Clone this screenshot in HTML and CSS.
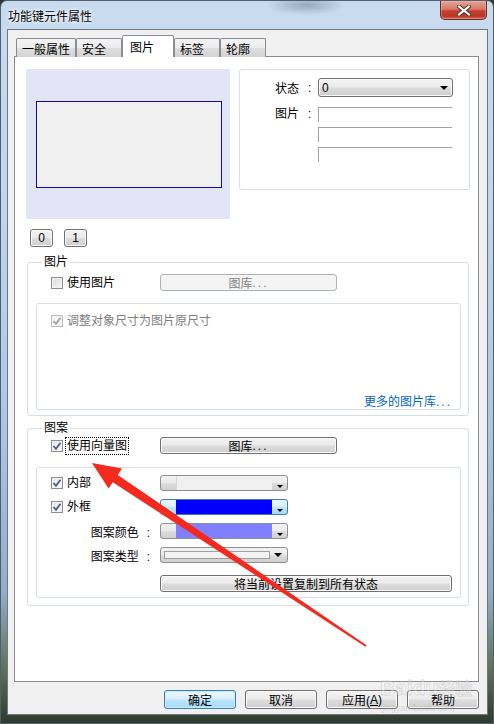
FILE: index.html
```html
<!DOCTYPE html>
<html lang="zh-CN">
<head>
    <meta charset="UTF-8">
    <title>功能键元件属性</title>
    <link rel="stylesheet" href="styles.css">
</head>
<body>
<div class="window">
    <div class="titlebar">
        <span class="title">功能键元件属性</span>
        <div class="close-btn">
            <svg width="14" height="11" viewBox="0 0 14 11">
                <path d="M2 1.5 L12 9.5 M12 1.5 L2 9.5" stroke="#4a2a26" stroke-width="4" stroke-linecap="square"/>
                <path d="M2 1.5 L12 9.5 M12 1.5 L2 9.5" stroke="#ffffff" stroke-width="2.2" stroke-linecap="square"/>
            </svg>
        </div>
    </div>

    <div class="client">
        <div class="tabs">
            <div class="tab tab-wide">一般属性</div>
            <div class="tab">安全</div>
            <div class="tab active">图片</div>
            <div class="tab">标签</div>
            <div class="tab">轮廓</div>
        </div>

        <div class="tab-panel">
            <div class="top-row">
                <div class="preview"><div class="preview-rect"></div></div>
                <div class="state-box">
                    <div class="field-row">
                        <span class="lbl">状态</span><span class="colon">:</span>
                        <div class="combo"><span>0</span><i class="arrow"></i></div>
                    </div>
                    <div class="field-row pic-row">
                        <span class="lbl">图片</span><span class="colon">:</span>
                        <div class="edits">
                            <div class="edit"></div>
                            <div class="edit"></div>
                            <div class="edit"></div>
                        </div>
                    </div>
                </div>
            </div>

            <div class="state-btns">
                <div class="btn small">0</div>
                <div class="btn small">1</div>
            </div>

            <!-- picture group -->
            <fieldset class="group">
                <legend>图片</legend>
                <div class="opt-row">
                    <label class="check">
                        <span class="cb"></span>使用图片
                    </label>
                    <div class="btn disabled lib-btn">图库<span class="dots">...</span></div>
                </div>
                <div class="inner-box pic-inner">
                    <label class="check muted">
                        <span class="cb cb-off">
                            <svg width="10" height="10" viewBox="0 0 10 10"><path d="M1.5 5 L4 7.8 L8.5 1.8" fill="none" stroke="#a3a3a3" stroke-width="1.8"/></svg>
                        </span>调整对象尺寸为图片原尺寸
                    </label>
                    <a class="more-link">更多的图片库<span class="dots">...</span></a>
                </div>
            </fieldset>

            <!-- pattern group -->
            <fieldset class="group group-pattern">
                <legend>图案</legend>
                <div class="opt-row">
                    <label class="check">
                        <span class="cb cb-on">
                            <svg width="10" height="10" viewBox="0 0 10 10"><path d="M1.5 5 L4 7.8 L8.5 1.8" fill="none" stroke="#4b5f8e" stroke-width="1.8"/></svg>
                        </span><span class="focus">使用向量图</span>
                    </label>
                    <div class="btn lib-btn">图库<span class="dots">...</span></div>
                </div>
                <div class="inner-box pattern-inner">
                    <div class="p-row">
                        <label class="check">
                            <span class="cb cb-on">
                                <svg width="10" height="10" viewBox="0 0 10 10"><path d="M1.5 5 L4 7.8 L8.5 1.8" fill="none" stroke="#4b5f8e" stroke-width="1.8"/></svg>
                            </span>内部
                        </label>
                        <div class="colorpick"><span class="cp-left"></span><span class="cp-swatch sw-light"></span><span class="cp-drop"><i></i></span></div>
                    </div>
                    <div class="p-row">
                        <label class="check">
                            <span class="cb cb-on">
                                <svg width="10" height="10" viewBox="0 0 10 10"><path d="M1.5 5 L4 7.8 L8.5 1.8" fill="none" stroke="#4b5f8e" stroke-width="1.8"/></svg>
                            </span>外框
                        </label>
                        <div class="colorpick focused"><span class="cp-left"></span><span class="cp-swatch sw-blue"></span><span class="cp-drop"><i></i></span></div>
                    </div>
                    <div class="p-row">
                        <span class="p-label">图案颜色<span class="colon2">:</span></span>
                        <div class="colorpick"><span class="cp-left"></span><span class="cp-swatch sw-lilac"></span><span class="cp-drop"><i></i></span></div>
                    </div>
                    <div class="p-row">
                        <span class="p-label">图案类型<span class="colon2">:</span></span>
                        <div class="typepick"><span class="tp-box"></span><i class="arrow"></i></div>
                    </div>
                    <div class="p-row copy-row">
                        <span class="p-label"></span>
                        <div class="btn copy-btn">将当前设置复制到所有状态</div>
                    </div>
                </div>
            </fieldset>
        </div>

        <div class="dialog-btns">
            <div class="btn dlg default">确定</div>
            <div class="btn dlg">取消</div>
            <div class="btn dlg">应用(<u>A</u>)</div>
            <div class="btn dlg">帮助</div>
        </div>
    </div>

    <!-- annotation drawn over the screenshot -->
    <svg class="overlay" width="494" height="724" viewBox="0 0 494 724">
        <polygon fill="#f42a1f" points="92,463 122,468.6 117.8,474.9 366.6,645.2 365.4,646.8 112.8,482.3 108.6,488.6"/>
        <text x="380" y="695" class="wm">Baidu<tspan class="wm-cn">经验</tspan></text>
        <text x="382" y="711" class="wm-small">jingyan.baidu.com</text>
    </svg>
</div>
</body>
</html>
```

FILE: styles.css
```css
* {
    box-sizing: border-box;
}

html, body {
    margin: 0;
    padding: 0;
}

body {
    width: 494px;
    height: 724px;
    overflow: hidden;
    font-family: "Liberation Sans", "Noto Sans CJK SC", sans-serif;
    font-size: 12px;
    color: #000;
    background: #2e3a2c;
}

.window {
    position: relative;
    width: 494px;
    height: 724px;
    padding: 0 5px 8px 6px;
    border: 1px solid #51606f;
    border-radius: 7px 7px 0 0;
    background:
        radial-gradient(ellipse 40px 10px at 305px 4px, rgba(90, 110, 130, 0.45), transparent),
        linear-gradient(to bottom, #c8dbef 0%, #bfd5ed 30%, #aac5e5 60%, #93adc8 82%, #5b6e55 93%, #2f3b2d 100%);
}

/* title bar */
.titlebar {
    height: 28px;
    display: flex;
    align-items: center;
    padding-left: 1px;
}

.title {
    font-size: 12px;
    text-shadow: 0 0 6px #fff, 0 0 3px #fff;
}

.close-btn {
    align-self: flex-start;
    margin-left: auto;
    margin-right: 1px;
    width: 47px;
    height: 19px;
    border: 1px solid #6b2c25;
    border-top: none;
    border-radius: 0 0 5px 5px;
    background: linear-gradient(to bottom, #e6a596 0%, #d77968 45%, #c3402e 55%, #b83a2a 85%, #d06a54 100%);
    display: flex;
    align-items: center;
    justify-content: center;
    box-shadow: inset 0 0 0 1px rgba(255, 200, 190, 0.35);
}

/* client area */
.client {
    height: 686px;
    border: 1px solid #6f7782;
    background: #f0f0f0;
    padding: 5px 8px 0 6px;
}

.tabs {
    display: flex;
    align-items: flex-end;
    height: 22px;
    margin-bottom: -1px;
    padding-left: 2px;
}

.tab {
    width: 46px;
    height: 19px;
    border: 1px solid #898c95;
    border-bottom: none;
    border-radius: 2px 2px 0 0;
    background: linear-gradient(to bottom, #f4f4f4 0%, #ececec 50%, #dedede 52%, #d4d4d4 100%);
    display: flex;
    align-items: center;
    padding-left: 5px;
}

.tab-wide {
    width: 60px;
}

.tab.active {
    position: relative;
    z-index: 1;
    width: 52px;
    height: 22px;
    background: #fff;
    padding-left: 7px;
}

.tab-panel {
    height: 626px;
    border: 1px solid #898c95;
    background: #fff;
    padding: 12px 0 0 11px;
}

.top-row {
    display: flex;
    gap: 9px;
    height: 150px;
}

.preview {
    width: 204px;
    height: 150px;
    background: #e4e4f7;
    padding: 32px 0 0 10px;
}

.preview-rect {
    width: 186px;
    height: 87px;
    border: 1px solid #0c0ca6;
    background: #f0f0f0;
}

.state-box {
    width: 231px;
    height: 121px;
    border: 1px solid #d5dfe5;
    border-radius: 3px;
    padding: 8px 0 0 35px;
}

.field-row {
    display: flex;
    align-items: center;
}

.pic-row {
    align-items: flex-start;
    margin-top: 10px;
    line-height: 15px;
}

.lbl {
    width: 24px;
}

.colon {
    width: 19px;
    padding-left: 9px;
}

.combo {
    width: 135px;
    height: 19px;
    border: 1px solid #707070;
    border-radius: 3px;
    background: linear-gradient(to bottom, #f2f2f2 0%, #ebebeb 49%, #dddddd 51%, #cfcfcf 100%);
    box-shadow: inset 0 0 0 1px #fafafa;
    display: flex;
    align-items: center;
    padding: 0 4px 0 3px;
}

.arrow {
    margin-left: auto;
    border-left: 4px solid transparent;
    border-right: 4px solid transparent;
    border-top: 4px solid #000;
}

.edits {
    display: flex;
    flex-direction: column;
    gap: 5px;
}

.edit {
    width: 134px;
    height: 15px;
    border-top: 1px solid #a0a0a0;
    border-left: 1px solid #a0a0a0;
    background: #fff;
}

.state-btns {
    display: flex;
    gap: 11px;
    margin: 10px 0 0 4px;
}

/* win7 push buttons */
.btn {
    display: flex;
    align-items: center;
    justify-content: center;
    border: 1px solid #707070;
    border-radius: 3px;
    background: linear-gradient(to bottom, #f2f2f2 0%, #ebebeb 49%, #dddddd 51%, #cfcfcf 100%);
    box-shadow: inset 0 0 0 1px #fbfbfb;
}

.btn.small {
    width: 23px;
    height: 18px;
}

.btn.disabled {
    border-color: #adb2b5;
    background: #f4f4f4;
    box-shadow: none;
    color: #838383;
}

.dots {
    letter-spacing: 2px;
}

/* group boxes */
.group {
    width: 442px;
    margin: 8px 0 0 1px;
    border: 1px solid #d5dfe5;
    border-radius: 3px;
    padding: 5px 7px 5px 8px;
    min-inline-size: 0;
}

.group legend {
    margin-left: 6px;
    padding: 0 2px;
    line-height: 14px;
}

.group-pattern {
    margin-top: 5px;
    padding-top: 2px;
    padding-bottom: 7px;
}

.opt-row {
    display: grid;
    grid-template-columns: 109px 177px;
    align-items: center;
    height: 17px;
    padding-left: 15px;
}

.opt-row .check {
    padding-top: 1px;
}

.lib-btn {
    width: 177px;
    height: 17px;
}

.check {
    display: flex;
    align-items: center;
    gap: 4px;
    line-height: 14px;
}

.cb {
    width: 12px;
    height: 12px;
    flex: none;
    border: 1px solid #8e8f8f;
    background: linear-gradient(135deg, #d8d8d8 0%, #e8e8e8 50%, #fafafa 100%);
    box-shadow: inset 0 0 0 1px #f3f3f3;
    display: flex;
    align-items: center;
    justify-content: center;
}

.cb-on {
    background: linear-gradient(135deg, #e4e4e4, #fbfbfb);
}

.cb-off {
    border-color: #bcbcbc;
    background: #f4f4f4;
    box-shadow: none;
}

.muted {
    color: #7d7d7d;
}

.focus {
    outline: 1px dotted #000;
    outline-offset: 1px;
}

.inner-box {
    border: 1px solid #d5dfe5;
    border-radius: 3px;
}

.pic-inner {
    height: 107px;
    margin-top: 12px;
    padding: 10px 8px 0 14px;
    display: flex;
    flex-direction: column;
}

.more-link {
    margin-top: auto;
    align-self: flex-end;
    color: #0066cc;
    line-height: 14px;
}

.pattern-inner {
    height: 131px;
    margin-top: 13px;
    padding: 7px 0 0 14px;
    display: flex;
    flex-direction: column;
    gap: 8px;
}

.p-row {
    display: flex;
    align-items: center;
    height: 16px;
}

.p-row .check,
.p-label {
    width: 109px;
    flex: none;
}

.p-label {
    text-align: right;
    padding-right: 10px;
}

.colon2 {
    margin-left: 8px;
}

.copy-row {
    height: 17px;
    margin-top: 4px;
}

.copy-btn {
    width: 292px;
    height: 17px;
}

.colorpick {
    width: 128px;
    height: 16px;
    display: flex;
    border: 1px solid #8e8f8f;
    border-radius: 3px;
    overflow: hidden;
    background: linear-gradient(to bottom, #f2f2f2 0%, #ebebeb 49%, #dddddd 51%, #cfcfcf 100%);
}

.colorpick.focused {
    border-color: #3c7fb1;
    background: linear-gradient(to bottom, #eaf6fd 0%, #d9f0fc 49%, #bee6fd 51%, #a7d9f5 100%);
}

.cp-left {
    width: 15px;
}

.cp-swatch {
    width: 96px;
}

.sw-light {
    background: #f0f0f0;
    border-left: 1px solid #d6d6d6;
}

.sw-blue {
    background: #0000ff;
}

.sw-lilac {
    background: #8080ff;
}

.cp-drop {
    flex: 1;
    display: flex;
    align-items: flex-end;
    justify-content: center;
    padding-bottom: 2px;
}

.cp-drop i {
    border-left: 3px solid transparent;
    border-right: 3px solid transparent;
    border-top: 3px solid #000;
}

.typepick {
    width: 128px;
    height: 16px;
    display: flex;
    align-items: center;
    border: 1px solid #8e8f8f;
    border-radius: 3px;
    padding: 0 5px 0 3px;
    background: linear-gradient(to bottom, #f2f2f2 0%, #ebebeb 49%, #dddddd 51%, #cfcfcf 100%);
}

.tp-box {
    width: 106px;
    height: 8px;
    border: 1px solid #a0a0a0;
    background: #f4f4f4;
}

/* dialog buttons */
.dialog-btns {
    display: flex;
    justify-content: flex-end;
    gap: 9px;
    margin-top: 8px;
}

.btn.dlg {
    width: 72px;
    height: 19px;
}

.btn.default {
    border-color: #3c7fb1;
    background: linear-gradient(to bottom, #eaf6fd 0%, #d9f0fc 49%, #bee6fd 51%, #a7d9f5 100%);
    box-shadow: inset 0 0 0 1px #c9ecfc;
}

.overlay {
    position: absolute;
    left: -1px;
    top: -1px;
    pointer-events: none;
}

.wm {
    font-family: "Liberation Sans", sans-serif;
    font-size: 21px;
    font-weight: bold;
    fill: rgba(255, 255, 255, 0.3);
    stroke: rgba(150, 150, 150, 0.3);
    stroke-width: 0.8;
}

.wm-cn {
    font-family: "Noto Sans CJK SC", sans-serif;
    font-size: 17px;
}

.wm-small {
    font-family: "Liberation Sans", sans-serif;
    font-size: 9px;
    fill: rgba(160, 160, 160, 0.35);
}
```
